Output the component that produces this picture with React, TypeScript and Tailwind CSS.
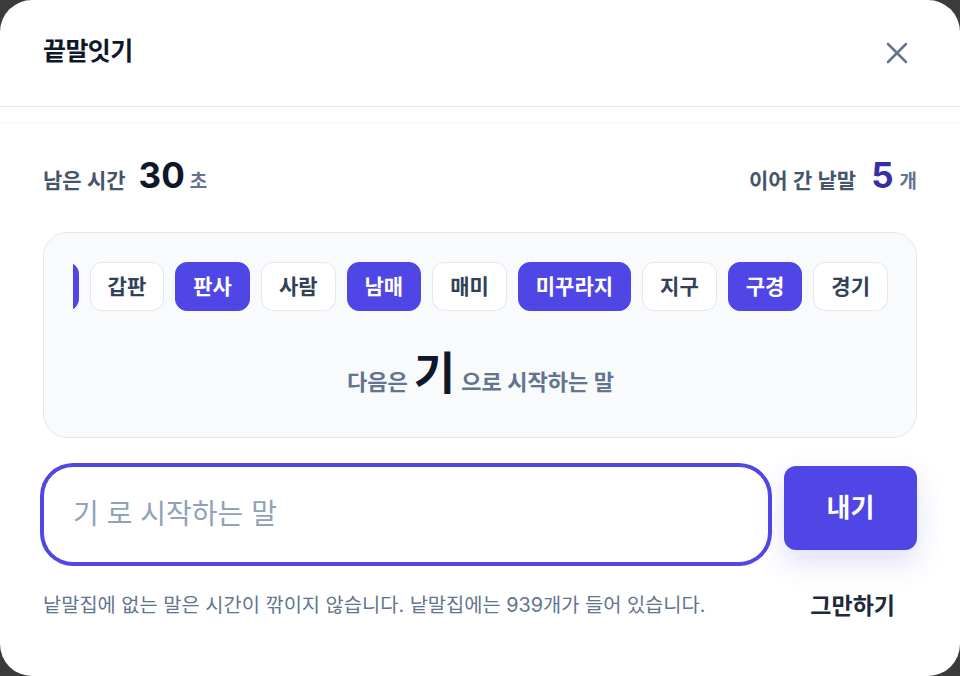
import { useState } from 'react'

const chain = [
  { word: '돼지', mine: false },
  { word: '지갑', mine: true },
  { word: '갑판', mine: false },
  { word: '판사', mine: true },
  { word: '사람', mine: false },
  { word: '남매', mine: true },
  { word: '매미', mine: false },
  { word: '미꾸라지', mine: true },
  { word: '지구', mine: false },
  { word: '구경', mine: true },
  { word: '경기', mine: false },
]

export default function App() {
  const [value, setValue] = useState('')

  return (
    <div
      className="min-h-screen bg-[#3b3b3b]"
      style={{ fontFamily: 'Inter, "Noto Sans CJK KR", sans-serif' }}
    >
      <div className="flex h-[676px] flex-col overflow-hidden rounded-[32px] bg-white">
        {/* Header */}
        <header className="flex h-[107px] shrink-0 items-center justify-between border-b border-slate-200 pl-[43px] pr-[52px]">
          <h1 className="pb-[2px] text-[25px] font-bold tracking-tight text-slate-900">끝말잇기</h1>
          <button className="text-slate-500" aria-label="닫기">
            <svg width="22" height="22" viewBox="0 0 22 22" fill="none">
              <path d="M2 2L20 20M20 2L2 20" stroke="currentColor" strokeWidth="2.5" strokeLinecap="round" />
            </svg>
          </button>
        </header>
        <div className="mt-[14px] h-[4px] bg-[#fafbfc]" />

        <main className="flex flex-1 flex-col px-[43px]">
          {/* Stats */}
          <div className="mt-[33px] flex items-baseline justify-between">
            <div className="flex items-baseline">
              <span className="text-[21px] font-semibold text-slate-600">남은 시간</span>
              <span className="ml-[13px] text-[35px] font-bold leading-none text-slate-900">30</span>
              <span className="ml-[5px] text-[19px] font-semibold text-slate-500">초</span>
            </div>
            <div className="flex items-baseline">
              <span className="text-[21px] font-semibold text-slate-600">이어 간 낱말</span>
              <span className="ml-[15px] text-[35px] font-bold leading-none text-[#3730a3]">5</span>
              <span className="ml-[6px] text-[19px] font-semibold text-slate-500">개</span>
            </div>
          </div>

          {/* Chain panel: newest words stay at the right, older ones slide out left */}
          <section className="mt-[35px] rounded-[24px] border border-slate-200 bg-slate-50 pl-[29px] pr-[28px] pt-[29px] pb-[41px]">
            <div className="flex justify-end gap-[11px] overflow-hidden">
              {chain.map((c) => (
                <span
                  key={c.word}
                  className={`shrink-0 rounded-[12px] border px-[17px] py-[10px] text-[21px] leading-[27px] font-bold ${
                    c.mine
                      ? 'border-[#4f46e5] bg-[#4f46e5] text-white'
                      : 'border-slate-200 bg-white text-slate-700'
                  }`}
                >
                  {c.word}
                </span>
              ))}
            </div>
            <p className="mt-[40px] flex items-baseline justify-center gap-[6px] leading-none">
              <span className="text-[22px] font-semibold text-slate-500">다음은</span>
              <span className="text-[45px] font-bold text-slate-900">기</span>
              <span className="text-[22px] font-semibold text-slate-500">으로 시작하는 말</span>
            </p>
          </section>

          {/* Input row */}
          <div className="mt-[28px] flex items-start gap-[15px]">
            <input
              value={value}
              onChange={(e) => setValue(e.target.value)}
              placeholder="기 로 시작하는 말"
              className="h-[97px] min-w-0 flex-1 rounded-[30px] border border-[#4f46e5] bg-white px-[29px] text-[28px] text-slate-900 shadow-[0_0_0_3px_#4f46e5] outline-none placeholder:text-slate-400"
            />
            <button className="h-[84px] w-[133px] shrink-0 rounded-[12px] bg-[#4f46e5] text-[26px] font-bold text-white shadow-[0_12px_28px_rgba(79,70,229,0.18)]">
              내기
            </button>
          </div>

          {/* Footer */}
          <div className="mt-[26px] flex items-center justify-between">
            <p className="text-[19.8px] text-slate-500">
              낱말집에 없는 말은 시간이 깎이지 않습니다. 낱말집에는 939개가 들어 있습니다.
            </p>
            <button className="pr-[22px] text-[23px] font-bold text-slate-800">그만하기</button>
          </div>
        </main>
      </div>
    </div>
  )
}
